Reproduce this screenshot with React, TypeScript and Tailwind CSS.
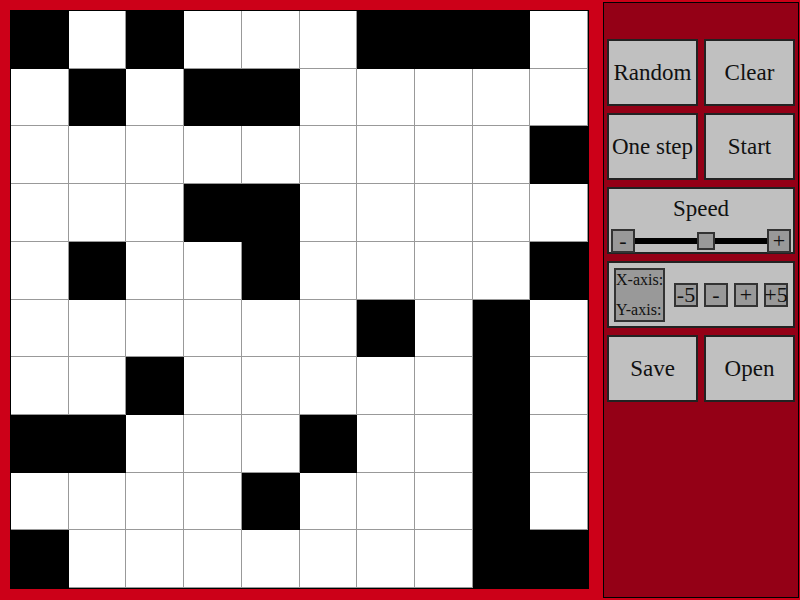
import React, { useState } from 'react';

const START = [
  '1010001110',
  '0101100000',
  '0000000001',
  '0001100000',
  '0100100001',
  '0000001010',
  '0010000010',
  '1100010010',
  '0000100010',
  '1000000011',
];

const btn =
  'flex items-center justify-center bg-[#c0c0c0] border-2 border-[#222] text-[23px] text-[#111] leading-none';
const small =
  'flex items-center justify-center w-[24px] h-[24px] bg-[#999] border-2 border-[#333] text-[22px] text-[#111] leading-none';

const App: React.FC = () => {
  const [cells, setCells] = useState<boolean[][]>(START.map(r => r.split('').map(c => c === '1')));
  const [speed] = useState(54);

  const toggle = (r: number, c: number) => {
    setCells(prev => prev.map((row, i) => row.map((v, j) => (i === r && j === c ? !v : v))));
  };

  return (
    <div className="w-[800px] h-[600px] bg-[#cc0018] flex font-['Liberation_Serif',serif]">
      <div className="pl-[10px] pt-[10px]">
        <div className="w-[579px] h-[579px] border border-black grid grid-cols-10 grid-rows-10 bg-white">
          {cells.map((row, r) =>
            row.map((alive, c) => (
              <div
                key={r + '-' + c}
                onClick={() => toggle(r, c)}
                className={
                  'border-r border-b border-black/40 ' + (alive ? 'bg-black' : 'bg-white')
                }
              />
            ))
          )}
        </div>
      </div>

      <div className="ml-[14px] mt-[2px] w-[196px] h-[596px] border border-black bg-[#940016] px-[3px] pt-[36px]">
        <div className="grid grid-cols-2 gap-x-[6px] gap-y-[7px]">
          <button className={btn + ' h-[67px]'}>Random</button>
          <button className={btn + ' h-[67px]'}>Clear</button>
          <button className={btn + ' h-[67px]'}>One step</button>
          <button className={btn + ' h-[67px]'}>Start</button>

          <div className="col-span-2 h-[67px] bg-[#c0c0c0] border-2 border-[#222] flex flex-col px-[2px]">
            <div className="text-[23px] text-[#111] text-center leading-none mt-[8px]">Speed</div>
            <div className="flex items-center mt-[9px]">
              <button className={small}>-</button>
              <div className="relative flex-1 h-[6px] bg-black">
                <div
                  className="absolute top-[-6px] w-[18px] h-[18px] bg-[#999] border-2 border-[#333]"
                  style={{ left: `calc(${speed}% - 9px)` }}
                />
              </div>
              <button className={small}>+</button>
            </div>
          </div>

          <div className="col-span-2 h-[67px] bg-[#c0c0c0] border-2 border-[#222] flex items-center pl-[5px]">
            <div className="w-[51px] h-[54px] bg-[#999] border-2 border-[#333] flex flex-col justify-between py-[2px] text-[16px] text-[#111] leading-none whitespace-nowrap">
              <span>X-axis:</span>
              <span>Y-axis:</span>
            </div>
            <div className="flex gap-[6px] ml-[9px]">
              <button className={small}>-5</button>
              <button className={small}>-</button>
              <button className={small}>+</button>
              <button className={small}>+5</button>
            </div>
          </div>

          <button className={btn + ' h-[67px]'}>Save</button>
          <button className={btn + ' h-[67px]'}>Open</button>
        </div>
      </div>
    </div>
  );
};

export default App;
